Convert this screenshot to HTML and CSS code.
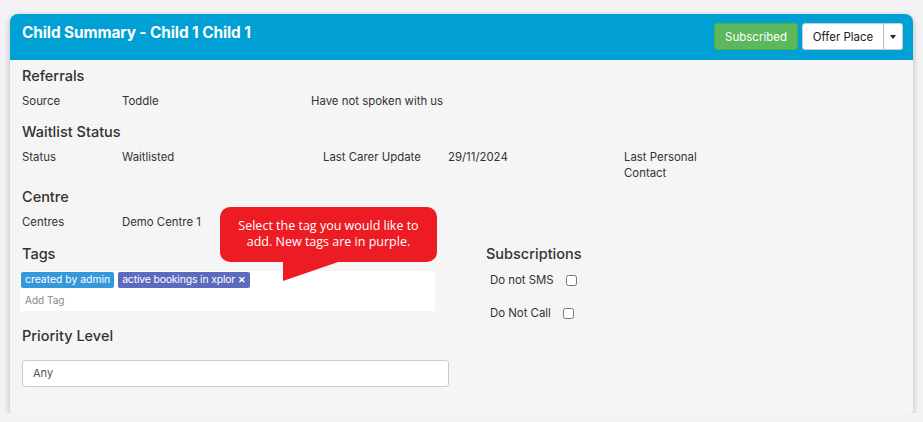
FILE: index.html
```html
<!DOCTYPE html>
<html lang="en">
<head>
    <meta charset="UTF-8">
    <meta name="viewport" content="width=device-width, initial-scale=1.0">
    <title>Child Summary</title>
    <link rel="stylesheet" href="styles.css">
</head>
<body>
    <div class="panel">
        <div class="panel-heading">
            <h2 class="panel-title">Child Summary - Child 1 Child 1</h2>
            <div class="panel-actions">
                <button class="btn btn-success">Subscribed</button>
                <div class="btn-group">
                    <button class="btn btn-default">Offer Place</button>
                    <button class="btn btn-default btn-caret"><span class="caret"></span></button>
                </div>
            </div>
        </div>

        <div class="panel-body">
            <h4 class="section-title">Referrals</h4>
            <div class="row">
                <div class="cell cell-label">Source</div>
                <div class="cell cell-value">Toddle</div>
                <div class="cell">Have not spoken with us</div>
            </div>

            <h4 class="section-title">Waitlist Status</h4>
            <div class="row row-tall">
                <div class="cell cell-label">Status</div>
                <div class="cell cell-value-wide">Waitlisted</div>
                <div class="cell cell-mid">Last Carer Update</div>
                <div class="cell cell-date">29/11/2024</div>
                <div class="cell cell-narrow">Last Personal Contact</div>
            </div>

            <h4 class="section-title">Centre</h4>
            <div class="row">
                <div class="cell cell-label">Centres</div>
                <div class="cell">Demo Centre 1</div>
            </div>

            <div class="columns">
                <div class="col-left">
                    <h4 class="section-title">Tags</h4>
                    <div class="tag-box">
                        <div class="tag-list">
                            <span class="tag tag-blue">created by admin</span>
                            <span class="tag tag-purple">active bookings in xplor <span class="tag-x">&#10005;</span></span>
                        </div>
                        <div class="add-tag">Add Tag</div>
                    </div>

                    <h4 class="section-title priority-title">Priority Level</h4>
                    <div class="select">Any</div>
                </div>
                <div class="col-right">
                    <h4 class="section-title">Subscriptions</h4>
                    <label class="check-row">Do not SMS <input type="checkbox"></label>
                    <label class="check-row check-call">Do Not Call <input type="checkbox"></label>
                </div>
            </div>
        </div>

        <div class="callout">Select the tag you would like to add. New tags are in purple.</div>
    </div>
</body>
</html>
```

FILE: styles.css
```css
body {
    margin: 0;
    padding: 14px 10px 0 10px;
    background: #f3f3f5;
    font-family: Inter, "Noto Sans", sans-serif;
    color: #333;
}
.panel {
    position: relative;
    width: 903px;
    height: 399px;
    background: #f5f5f5;
    border-radius: 8px 8px 3px 3px;
    box-shadow: 0 2px 6px rgba(0,0,0,0.25);
}
.panel-heading {
    height: 46px;
    box-sizing: border-box;
    padding: 9px 10px 0 12px;
    background: #009fd4;
    border-radius: 8px 8px 0 0;
    display: flex;
    justify-content: space-between;
    align-items: flex-start;
}
.panel-title {
    margin: 0;
    padding-top: 1px;
    color: white;
    font-size: 15.4px;
    font-weight: 700;
    line-height: 18px;
    letter-spacing: -0.1px;
}
.panel-actions {
    display: flex;
    gap: 4px;
}
.btn {
    height: 27px;
    font-family: inherit;
    font-size: 11.5px;
    border-radius: 3px;
    padding: 0;
    white-space: nowrap;
    cursor: pointer;
}
.btn-success {
    background: #5cb85c;
    color: white;
    border: 1px solid #4cae4c;
    width: 84px;
}
.btn-group {
    display: flex;
}
.btn-default {
    background: white;
    color: #222;
    border: 1px solid #ccc;
    width: 82px;
    border-radius: 3px 0 0 3px;
}
.btn-caret {
    width: 20px;
    padding: 0;
    border-left: 1px solid #bbb;
    border-radius: 0 3px 3px 0;
    margin-left: -1px;
}
.caret {
    display: inline-block;
    border-top: 4px solid #222;
    border-left: 3.5px solid transparent;
    border-right: 3.5px solid transparent;
    vertical-align: middle;
}
.panel-body {
    padding: 6px 12px 0 12px;
}
.section-title {
    margin: 0;
    font-size: 14.5px;
    font-weight: 500;
    line-height: 20px;
    color: #333;
}
.row {
    display: flex;
    font-size: 11.4px;
    line-height: 16px;
    margin: 7px 0 13px 0;
}
.row-tall {
    margin-bottom: 6px;
}
.cell-label {
    width: 100px;
}
.cell-value {
    width: 189px;
}
.cell-value-wide {
    width: 201px;
}
.cell-mid {
    width: 125px;
}
.cell-date {
    width: 176px;
}
.cell-narrow {
    width: 90px;
}
.columns {
    display: flex;
    padding-top: 1px;
}
.col-left {
    width: 427px;
}
.col-right {
    padding-left: 37px;
    display: flex;
    flex-direction: column;
}
.tag-box {
    margin: 7px 2px 0 -2px;
    width: 415px;
    height: 40px;
    background: white;
    box-sizing: border-box;
    padding: 1px 1px 0 1px;
}
.tag-list {
    display: flex;
    gap: 4px;
}
.tag {
    display: inline-block;
    height: 16px;
    line-height: 16px;
    padding: 0 4px;
    border-radius: 2px;
    color: white;
    font-size: 10.4px;
}
.tag-blue {
    background: #3498db;
}
.tag-purple {
    background: #5c6bc0;
    letter-spacing: -0.15px;
}
.tag-x {
    font-size: 9px;
    font-weight: 700;
}
.add-tag {
    padding: 4px 0 0 4px;
    font-size: 10px;
    line-height: 16px;
    color: #888;
}
.priority-title {
    margin-top: 15px;
}
.select {
    margin-top: 14px;
    height: 27px;
    box-sizing: border-box;
    border: 1px solid #ccc;
    border-radius: 3px;
    background: white;
    padding: 0 10px;
    font-size: 11px;
    line-height: 25px;
    color: #555;
}
.check-row {
    display: flex;
    align-items: center;
    gap: 12px;
    margin: 8px 0 0 4px;
    font-size: 11.4px;
    line-height: 16px;
    color: #333;
}
.check-call {
    margin-top: 17px;
}
.check-row input {
    width: 11px;
    height: 11px;
    margin: 0;
}
.callout {
    position: absolute;
    left: 210px;
    top: 193px;
    width: 217px;
    height: 55px;
    box-sizing: border-box;
    padding: 11px 12px 0 12px;
    background: #ed1c24;
    border-radius: 10px;
    color: white;
    font-family: "Open Sans", sans-serif;
    font-size: 12.5px;
    line-height: 16px;
    text-align: center;
}
.callout::after {
    content: "";
    position: absolute;
    left: 63px;
    top: 54px;
    width: 58px;
    height: 20px;
    background: #ed1c24;
    clip-path: polygon(0 0, 100% 0, 0 100%);
}
```
